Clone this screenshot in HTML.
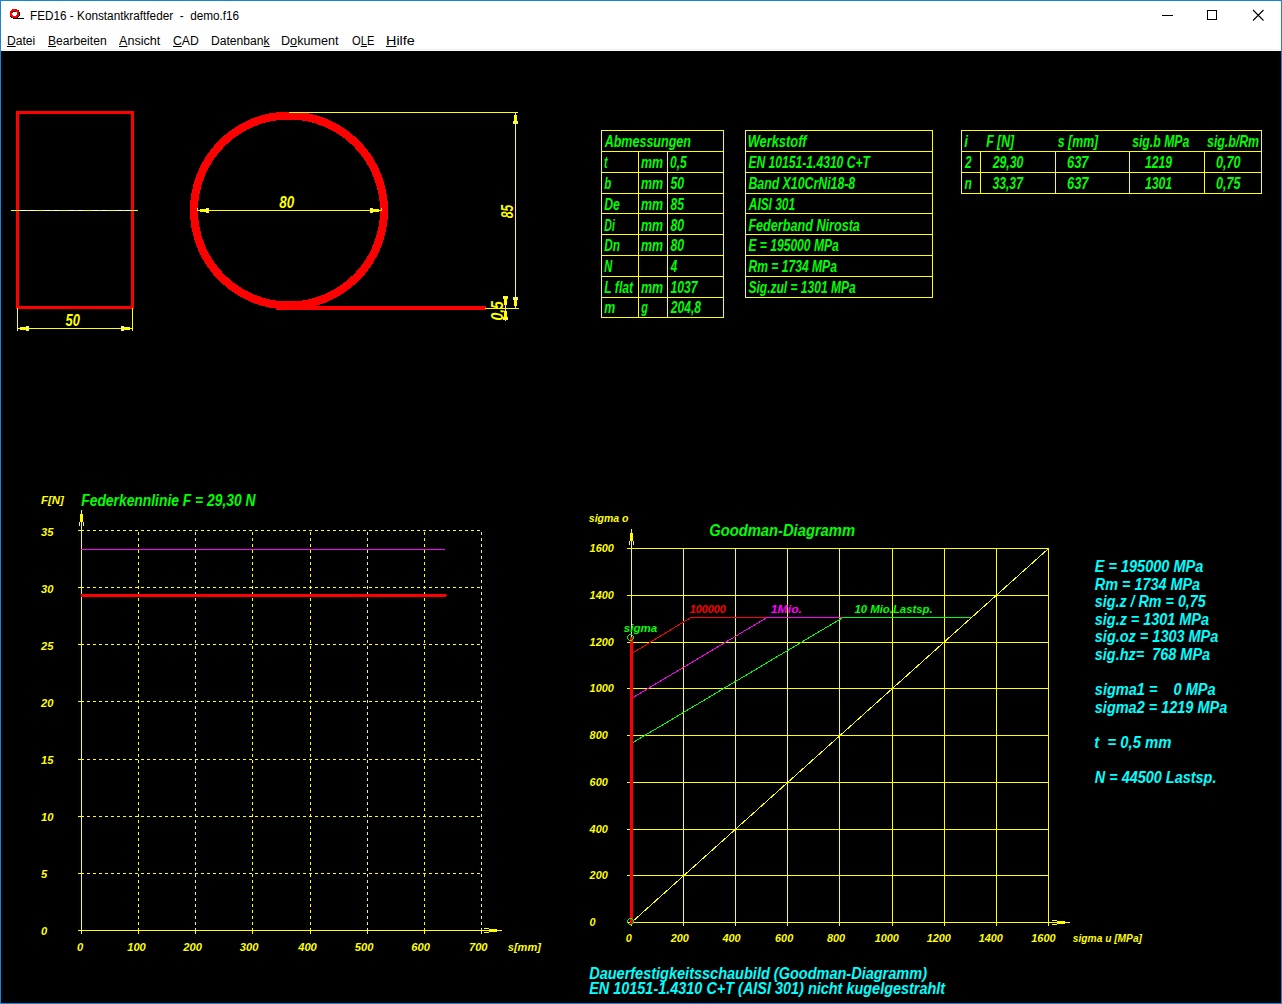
<!DOCTYPE html>
<html><head><meta charset="utf-8"><style>
html,body{margin:0;padding:0;width:1282px;height:1004px;overflow:hidden;background:#000;}
body{position:relative;font-family:"Liberation Sans",sans-serif;}
#win{position:absolute;left:0;top:0;width:1280px;height:1002px;border:1px solid #1883d7;background:#000;}
#title{position:absolute;left:0;top:0;width:1280px;height:30px;background:#fff;}
#menu{position:absolute;left:0;top:30px;width:1280px;height:20px;background:#fff;}
#menuline{position:absolute;left:0;top:48px;width:1280px;height:1px;background:#f0f0f0;}
.tt{position:absolute;left:29px;top:8px;font-size:12px;color:#000;white-space:pre;transform:scaleX(0.98);transform-origin:0 0;}
.mi{position:absolute;top:3px;font-size:12px;color:#000;white-space:pre;transform-origin:0 0;}
svg{position:absolute;left:0;top:0;}
svg text{font-family:"Liberation Sans",sans-serif;font-weight:bold;font-style:italic;white-space:pre;}
</style></head><body>
<div id="win">
<div id="title">
<svg width="30" height="30" style="left:0;top:0" shape-rendering="crispEdges"><rect x="11" y="8" width="5" height="1" fill="#f00"/><rect x="10" y="9" width="7" height="1" fill="#f00"/><rect x="17" y="9" width="1" height="1" fill="#000"/><rect x="9" y="10" width="3" height="1" fill="#f00"/><rect x="12" y="10" width="3" height="1" fill="#000"/><rect x="15" y="10" width="3" height="1" fill="#f00"/><rect x="9" y="11" width="2" height="1" fill="#f00"/><rect x="11" y="11" width="1" height="1" fill="#000"/><rect x="16" y="11" width="2" height="1" fill="#f00"/><rect x="18" y="11" width="1" height="1" fill="#000"/><rect x="9" y="12" width="2" height="1" fill="#f00"/><rect x="16" y="12" width="2" height="1" fill="#f00"/><rect x="18" y="12" width="1" height="1" fill="#000"/><rect x="9" y="13" width="2" height="1" fill="#f00"/><rect x="16" y="13" width="2" height="1" fill="#f00"/><rect x="18" y="13" width="1" height="1" fill="#000"/><rect x="9" y="14" width="3" height="1" fill="#f00"/><rect x="15" y="14" width="3" height="1" fill="#f00"/><rect x="18" y="14" width="1" height="1" fill="#000"/><rect x="9" y="15" width="1" height="1" fill="#000"/><rect x="10" y="15" width="7" height="1" fill="#f00"/><rect x="17" y="15" width="1" height="1" fill="#000"/><rect x="10" y="16" width="1" height="1" fill="#000"/><rect x="11" y="16" width="5" height="1" fill="#f00"/><rect x="16" y="16" width="1" height="1" fill="#000"/><rect x="12" y="17" width="11" height="1" fill="#000"/></svg>
<span class="tt">FED16 - Konstantkraftfeder  -  demo.f16</span>
<svg width="1280" height="30" style="left:0;top:0">
<line x1="1161" y1="14.5" x2="1172" y2="14.5" stroke="#000" stroke-width="1"/>
<rect x="1206.5" y="9.5" width="9" height="9" fill="none" stroke="#000" stroke-width="1"/>
<path d="M1252,9 L1262.5,19.5 M1262.5,9 L1252,19.5" stroke="#000" stroke-width="1.1"/>
</svg>
</div>
<div id="menu"><span class="mi" style="left:6.2px;transform:scaleX(1.01)"><u>D</u>atei</span><span class="mi" style="left:47px;transform:scaleX(1.01)"><u>B</u>earbeiten</span><span class="mi" style="left:118px;transform:scaleX(1.05)"><u>A</u>nsicht</span><span class="mi" style="left:171.5px;transform:scaleX(1.02)"><u>C</u>AD</span><span class="mi" style="left:209.5px;transform:scaleX(1.01)">Datenban<u>k</u></span><span class="mi" style="left:280.3px;transform:scaleX(1.05)">D<u>o</u>kument</span><span class="mi" style="left:350.5px;transform:scaleX(0.93)">O<u>L</u>E</span><span class="mi" style="left:385px;transform:scaleX(1.2)"><u>H</u>ilfe</span></div>
<div id="menuline"></div>
</div>
<svg width="1282" height="1004" viewBox="0 0 1282 1004" shape-rendering="crispEdges" style="left:0;top:0">
<rect x="17.5" y="112.5" width="115" height="195" fill="none" stroke="#ff0000" stroke-width="3"/>
<line x1="11" y1="210.5" x2="138" y2="210.5" stroke="#ffff00" stroke-width="1"/>
<line x1="20" y1="210.5" x2="26" y2="210.5" stroke="#ffffff" stroke-width="1"/>
<line x1="29" y1="210.5" x2="35" y2="210.5" stroke="#ffffff" stroke-width="1"/>
<line x1="44" y1="210.5" x2="50" y2="210.5" stroke="#ffffff" stroke-width="1"/>
<line x1="53" y1="210.5" x2="59" y2="210.5" stroke="#ffffff" stroke-width="1"/>
<line x1="68" y1="210.5" x2="74" y2="210.5" stroke="#ffffff" stroke-width="1"/>
<line x1="77" y1="210.5" x2="83" y2="210.5" stroke="#ffffff" stroke-width="1"/>
<line x1="92" y1="210.5" x2="98" y2="210.5" stroke="#ffffff" stroke-width="1"/>
<line x1="101" y1="210.5" x2="107" y2="210.5" stroke="#ffffff" stroke-width="1"/>
<line x1="116" y1="210.5" x2="122" y2="210.5" stroke="#ffffff" stroke-width="1"/>
<line x1="125" y1="210.5" x2="131" y2="210.5" stroke="#ffffff" stroke-width="1"/>
<line x1="17.5" y1="308" x2="17.5" y2="331" stroke="#ffff00" stroke-width="1"/>
<line x1="132.5" y1="308" x2="132.5" y2="331" stroke="#ffff00" stroke-width="1"/>
<line x1="17" y1="328.5" x2="133" y2="328.5" stroke="#ffff00" stroke-width="1"/>
<rect x="20" y="327" width="6" height="3" fill="#ffff00"/>
<rect x="26" y="326" width="3" height="5" fill="#ffff00"/>
<rect x="26" y="327" width="2" height="1" fill="#ffffff"/>
<rect x="26" y="329" width="2" height="1" fill="#ffffff"/>
<rect x="124" y="327" width="6" height="3" fill="#ffff00"/>
<rect x="121" y="326" width="3" height="5" fill="#ffff00"/>
<rect x="122" y="327" width="2" height="1" fill="#ffffff"/>
<rect x="122" y="329" width="2" height="1" fill="#ffffff"/>
<text transform="translate(65.57,326) scale(0.8066,1)" fill="#ffff00" font-size="16" xml:space="preserve">50</text>
<circle cx="289" cy="210.5" r="95" fill="none" stroke="#ff0000" stroke-width="8"/>
<rect x="276" y="306" width="210" height="4" fill="#ff0000"/>
<line x1="289" y1="112.5" x2="518" y2="112.5" stroke="#ffff00" stroke-width="1"/>
<line x1="515.5" y1="112" x2="515.5" y2="309" stroke="#ffff00" stroke-width="1"/>
<line x1="485" y1="308.5" x2="519" y2="308.5" stroke="#ffff00" stroke-width="1"/>
<rect x="514" y="115" width="3" height="6" fill="#ffff00"/>
<rect x="513" y="121" width="5" height="3" fill="#ffff00"/>
<rect x="514" y="121" width="1" height="2" fill="#ffffff"/>
<rect x="516" y="121" width="1" height="2" fill="#ffffff"/>
<rect x="514" y="300" width="3" height="6" fill="#ffff00"/>
<rect x="513" y="297" width="5" height="3" fill="#ffff00"/>
<rect x="514" y="298" width="1" height="2" fill="#ffffff"/>
<rect x="516" y="298" width="1" height="2" fill="#ffffff"/>
<text transform="translate(513,218.25) rotate(-90) scale(0.7545,1)" fill="#ffff00" font-size="16" xml:space="preserve">85</text>
<line x1="505.5" y1="297" x2="505.5" y2="321" stroke="#ffff00" stroke-width="1"/>
<rect x="503" y="296" width="5" height="3" fill="#ffff00"/>
<rect x="504" y="297" width="1" height="1" fill="#ffffff"/>
<rect x="506" y="297" width="1" height="1" fill="#ffffff"/>
<rect x="504" y="299" width="3" height="6" fill="#ffff00"/>
<rect x="504" y="311" width="3" height="6" fill="#ffff00"/>
<rect x="503" y="317" width="5" height="3" fill="#ffff00"/>
<rect x="504" y="318" width="1" height="1" fill="#ffffff"/>
<rect x="506" y="318" width="1" height="1" fill="#ffffff"/>
<text transform="translate(503,320.59) rotate(-90) scale(0.8732,1)" fill="#ffff00" font-size="16" xml:space="preserve">0,5</text>
<line x1="197" y1="210.5" x2="382" y2="210.5" stroke="#ffff00" stroke-width="1"/>
<rect x="200" y="209" width="6" height="3" fill="#ffff00"/>
<rect x="206" y="208" width="3" height="5" fill="#ffff00"/>
<rect x="206" y="209" width="2" height="1" fill="#ffffff"/>
<rect x="206" y="211" width="2" height="1" fill="#ffffff"/>
<rect x="373" y="209" width="6" height="3" fill="#ffff00"/>
<rect x="370" y="208" width="3" height="5" fill="#ffff00"/>
<rect x="371" y="209" width="2" height="1" fill="#ffffff"/>
<rect x="371" y="211" width="2" height="1" fill="#ffffff"/>
<line x1="197.5" y1="208" x2="197.5" y2="211" stroke="#ffff00" stroke-width="1"/>
<line x1="381.5" y1="208" x2="381.5" y2="211" stroke="#ffff00" stroke-width="1"/>
<text transform="translate(279.23,208) scale(0.8372,1)" fill="#ffff00" font-size="16" xml:space="preserve">80</text>
<line x1="601" y1="130.5" x2="724" y2="130.5" stroke="#ffff00" stroke-width="1"/>
<line x1="601" y1="151.5" x2="724" y2="151.5" stroke="#ffff00" stroke-width="1"/>
<line x1="601" y1="172.5" x2="724" y2="172.5" stroke="#ffff00" stroke-width="1"/>
<line x1="601" y1="193.5" x2="724" y2="193.5" stroke="#ffff00" stroke-width="1"/>
<line x1="601" y1="213.5" x2="724" y2="213.5" stroke="#ffff00" stroke-width="1"/>
<line x1="601" y1="234.5" x2="724" y2="234.5" stroke="#ffff00" stroke-width="1"/>
<line x1="601" y1="255.5" x2="724" y2="255.5" stroke="#ffff00" stroke-width="1"/>
<line x1="601" y1="276.5" x2="724" y2="276.5" stroke="#ffff00" stroke-width="1"/>
<line x1="601" y1="297.5" x2="724" y2="297.5" stroke="#ffff00" stroke-width="1"/>
<line x1="601" y1="317.5" x2="724" y2="317.5" stroke="#ffff00" stroke-width="1"/>
<line x1="601.5" y1="130" x2="601.5" y2="318" stroke="#ffff00" stroke-width="1"/>
<line x1="723.5" y1="130" x2="723.5" y2="318" stroke="#ffff00" stroke-width="1"/>
<line x1="638.5" y1="151" x2="638.5" y2="318" stroke="#ffff00" stroke-width="1"/>
<line x1="667.5" y1="151" x2="667.5" y2="318" stroke="#ffff00" stroke-width="1"/>
<text transform="translate(604.65,147) scale(0.7833,1)" fill="#00ff00" font-size="16" xml:space="preserve">Abmessungen</text>
<text transform="translate(604.04,168) scale(0.6731,1)" fill="#00ff00" font-size="16" xml:space="preserve">t</text>
<text transform="translate(640.98,168) scale(0.7740,1)" fill="#00ff00" font-size="16" xml:space="preserve">mm</text>
<text transform="translate(670.09,168) scale(0.7491,1)" fill="#00ff00" font-size="16" xml:space="preserve">0,5</text>
<text transform="translate(604.30,189) scale(0.7190,1)" fill="#00ff00" font-size="16" xml:space="preserve">b</text>
<text transform="translate(640.98,189) scale(0.7740,1)" fill="#00ff00" font-size="16" xml:space="preserve">mm</text>
<text transform="translate(670.48,189) scale(0.7666,1)" fill="#00ff00" font-size="16" xml:space="preserve">50</text>
<text transform="translate(604.29,210) scale(0.7606,1)" fill="#00ff00" font-size="16" xml:space="preserve">De</text>
<text transform="translate(640.98,210) scale(0.7740,1)" fill="#00ff00" font-size="16" xml:space="preserve">mm</text>
<text transform="translate(670.45,210) scale(0.7545,1)" fill="#00ff00" font-size="16" xml:space="preserve">85</text>
<text transform="translate(604.32,231) scale(0.6562,1)" fill="#00ff00" font-size="16" xml:space="preserve">Di</text>
<text transform="translate(640.98,231) scale(0.7740,1)" fill="#00ff00" font-size="16" xml:space="preserve">mm</text>
<text transform="translate(670.45,231) scale(0.7683,1)" fill="#00ff00" font-size="16" xml:space="preserve">80</text>
<text transform="translate(604.29,251) scale(0.7353,1)" fill="#00ff00" font-size="16" xml:space="preserve">Dn</text>
<text transform="translate(640.98,251) scale(0.7740,1)" fill="#00ff00" font-size="16" xml:space="preserve">mm</text>
<text transform="translate(670.45,251) scale(0.7683,1)" fill="#00ff00" font-size="16" xml:space="preserve">80</text>
<text transform="translate(604.31,272) scale(0.6920,1)" fill="#00ff00" font-size="16" xml:space="preserve">N</text>
<text transform="translate(670.80,272) scale(0.7175,1)" fill="#00ff00" font-size="16" xml:space="preserve">4</text>
<text transform="translate(604.29,293) scale(0.7592,1)" fill="#00ff00" font-size="16" xml:space="preserve">L flat</text>
<text transform="translate(640.98,293) scale(0.7740,1)" fill="#00ff00" font-size="16" xml:space="preserve">mm</text>
<text transform="translate(670.39,293) scale(0.7628,1)" fill="#00ff00" font-size="16" xml:space="preserve">1037</text>
<text transform="translate(604.28,313) scale(0.7681,1)" fill="#00ff00" font-size="16" xml:space="preserve">m</text>
<text transform="translate(641.23,313) scale(0.6723,1)" fill="#00ff00" font-size="16" xml:space="preserve">g</text>
<text transform="translate(670.78,313) scale(0.7547,1)" fill="#00ff00" font-size="16" xml:space="preserve">204,8</text>
<line x1="745" y1="130.5" x2="933" y2="130.5" stroke="#ffff00" stroke-width="1"/>
<line x1="745" y1="151.5" x2="933" y2="151.5" stroke="#ffff00" stroke-width="1"/>
<line x1="745" y1="172.5" x2="933" y2="172.5" stroke="#ffff00" stroke-width="1"/>
<line x1="745" y1="193.5" x2="933" y2="193.5" stroke="#ffff00" stroke-width="1"/>
<line x1="745" y1="213.5" x2="933" y2="213.5" stroke="#ffff00" stroke-width="1"/>
<line x1="745" y1="234.5" x2="933" y2="234.5" stroke="#ffff00" stroke-width="1"/>
<line x1="745" y1="255.5" x2="933" y2="255.5" stroke="#ffff00" stroke-width="1"/>
<line x1="745" y1="276.5" x2="933" y2="276.5" stroke="#ffff00" stroke-width="1"/>
<line x1="745" y1="297.5" x2="933" y2="297.5" stroke="#ffff00" stroke-width="1"/>
<line x1="745.5" y1="130" x2="745.5" y2="298" stroke="#ffff00" stroke-width="1"/>
<line x1="932.5" y1="130" x2="932.5" y2="298" stroke="#ffff00" stroke-width="1"/>
<text transform="translate(747.67,147) scale(0.8043,1)" fill="#00ff00" font-size="16" xml:space="preserve">Werkstoff</text>
<text transform="translate(748.39,168) scale(0.7573,1)" fill="#00ff00" font-size="16" xml:space="preserve">EN 10151-1.4310 C+T</text>
<text transform="translate(748.38,189) scale(0.7715,1)" fill="#00ff00" font-size="16" xml:space="preserve">Band X10CrNi18-8</text>
<text transform="translate(748.84,210) scale(0.7421,1)" fill="#00ff00" font-size="16" xml:space="preserve">AISI 301</text>
<text transform="translate(748.38,231) scale(0.7892,1)" fill="#00ff00" font-size="16" xml:space="preserve">Federband Nirosta</text>
<text transform="translate(748.39,251) scale(0.7560,1)" fill="#00ff00" font-size="16" xml:space="preserve">E = 195000 MPa</text>
<text transform="translate(748.39,272) scale(0.7573,1)" fill="#00ff00" font-size="16" xml:space="preserve">Rm = 1734 MPa</text>
<text transform="translate(748.45,293) scale(0.7517,1)" fill="#00ff00" font-size="16" xml:space="preserve">Sig.zul = 1301 MPa</text>
<line x1="961" y1="130.5" x2="1262" y2="130.5" stroke="#ffff00" stroke-width="1"/>
<line x1="961" y1="151.5" x2="1262" y2="151.5" stroke="#ffff00" stroke-width="1"/>
<line x1="961" y1="172.5" x2="1262" y2="172.5" stroke="#ffff00" stroke-width="1"/>
<line x1="961" y1="193.5" x2="1262" y2="193.5" stroke="#ffff00" stroke-width="1"/>
<line x1="961.5" y1="130" x2="961.5" y2="194" stroke="#ffff00" stroke-width="1"/>
<line x1="1261.5" y1="130" x2="1261.5" y2="194" stroke="#ffff00" stroke-width="1"/>
<line x1="980.5" y1="151" x2="980.5" y2="194" stroke="#ffff00" stroke-width="1"/>
<line x1="1055.5" y1="151" x2="1055.5" y2="194" stroke="#ffff00" stroke-width="1"/>
<line x1="1129.5" y1="151" x2="1129.5" y2="194" stroke="#ffff00" stroke-width="1"/>
<line x1="1204.5" y1="151" x2="1204.5" y2="194" stroke="#ffff00" stroke-width="1"/>
<text transform="translate(964.17,147) scale(0.8333,1)" fill="#00ff00" font-size="16" xml:space="preserve">i</text>
<text transform="translate(986.19,147) scale(0.7678,1)" fill="#00ff00" font-size="16" xml:space="preserve">F [N]</text>
<text transform="translate(1057.85,147) scale(0.7688,1)" fill="#00ff00" font-size="16" xml:space="preserve">s [mm]</text>
<text transform="translate(1132.15,147) scale(0.7658,1)" fill="#00ff00" font-size="16" xml:space="preserve">sig.b MPa</text>
<text transform="translate(1207.05,147) scale(0.7708,1)" fill="#00ff00" font-size="16" xml:space="preserve">sig.b/Rm</text>
<text transform="translate(964.98,168) scale(0.7366,1)" fill="#00ff00" font-size="16" xml:space="preserve">2</text>
<text transform="translate(992.68,168) scale(0.7694,1)" fill="#00ff00" font-size="16" xml:space="preserve">29,30</text>
<text transform="translate(1066.99,168) scale(0.8057,1)" fill="#00ff00" font-size="16" xml:space="preserve">637</text>
<text transform="translate(1144.99,168) scale(0.7605,1)" fill="#00ff00" font-size="16" xml:space="preserve">1219</text>
<text transform="translate(1215.96,168) scale(0.7916,1)" fill="#00ff00" font-size="16" xml:space="preserve">0,70</text>
<text transform="translate(964.59,189) scale(0.7466,1)" fill="#00ff00" font-size="16" xml:space="preserve">n</text>
<text transform="translate(992.41,189) scale(0.7618,1)" fill="#00ff00" font-size="16" xml:space="preserve">33,37</text>
<text transform="translate(1066.99,189) scale(0.8057,1)" fill="#00ff00" font-size="16" xml:space="preserve">637</text>
<text transform="translate(1144.99,189) scale(0.7636,1)" fill="#00ff00" font-size="16" xml:space="preserve">1301</text>
<text transform="translate(1215.97,189) scale(0.7833,1)" fill="#00ff00" font-size="16" xml:space="preserve">0,75</text>
<line x1="138.5" y1="532" x2="138.5" y2="931" stroke="#ffff00" stroke-width="1" stroke-dasharray="3 3"/>
<line x1="81" y1="873.5" x2="482" y2="873.5" stroke="#ffff00" stroke-width="1" stroke-dasharray="3 3"/>
<line x1="195.5" y1="532" x2="195.5" y2="931" stroke="#ffff00" stroke-width="1" stroke-dasharray="3 3"/>
<line x1="81" y1="816.5" x2="482" y2="816.5" stroke="#ffff00" stroke-width="1" stroke-dasharray="3 3"/>
<line x1="252.5" y1="532" x2="252.5" y2="931" stroke="#ffff00" stroke-width="1" stroke-dasharray="3 3"/>
<line x1="81" y1="759.5" x2="482" y2="759.5" stroke="#ffff00" stroke-width="1" stroke-dasharray="3 3"/>
<line x1="310.5" y1="532" x2="310.5" y2="931" stroke="#ffff00" stroke-width="1" stroke-dasharray="3 3"/>
<line x1="81" y1="701.5" x2="482" y2="701.5" stroke="#ffff00" stroke-width="1" stroke-dasharray="3 3"/>
<line x1="367.5" y1="532" x2="367.5" y2="931" stroke="#ffff00" stroke-width="1" stroke-dasharray="3 3"/>
<line x1="81" y1="644.5" x2="482" y2="644.5" stroke="#ffff00" stroke-width="1" stroke-dasharray="3 3"/>
<line x1="424.5" y1="532" x2="424.5" y2="931" stroke="#ffff00" stroke-width="1" stroke-dasharray="3 3"/>
<line x1="81" y1="587.5" x2="482" y2="587.5" stroke="#ffff00" stroke-width="1" stroke-dasharray="3 3"/>
<line x1="481.5" y1="532" x2="481.5" y2="931" stroke="#ffff00" stroke-width="1" stroke-dasharray="3 3"/>
<line x1="81" y1="530.5" x2="482" y2="530.5" stroke="#ffff00" stroke-width="1" stroke-dasharray="3 3"/>
<line x1="81.5" y1="510" x2="81.5" y2="934" stroke="#ffff00" stroke-width="1"/>
<line x1="78" y1="930.5" x2="502" y2="930.5" stroke="#ffff00" stroke-width="1"/>
<line x1="138.5" y1="930" x2="138.5" y2="934" stroke="#ffff00" stroke-width="1"/>
<line x1="78" y1="873.5" x2="81" y2="873.5" stroke="#ffff00" stroke-width="1"/>
<line x1="195.5" y1="930" x2="195.5" y2="934" stroke="#ffff00" stroke-width="1"/>
<line x1="78" y1="816.5" x2="81" y2="816.5" stroke="#ffff00" stroke-width="1"/>
<line x1="252.5" y1="930" x2="252.5" y2="934" stroke="#ffff00" stroke-width="1"/>
<line x1="78" y1="759.5" x2="81" y2="759.5" stroke="#ffff00" stroke-width="1"/>
<line x1="310.5" y1="930" x2="310.5" y2="934" stroke="#ffff00" stroke-width="1"/>
<line x1="78" y1="701.5" x2="81" y2="701.5" stroke="#ffff00" stroke-width="1"/>
<line x1="367.5" y1="930" x2="367.5" y2="934" stroke="#ffff00" stroke-width="1"/>
<line x1="78" y1="644.5" x2="81" y2="644.5" stroke="#ffff00" stroke-width="1"/>
<line x1="424.5" y1="930" x2="424.5" y2="934" stroke="#ffff00" stroke-width="1"/>
<line x1="78" y1="587.5" x2="81" y2="587.5" stroke="#ffff00" stroke-width="1"/>
<line x1="481.5" y1="930" x2="481.5" y2="934" stroke="#ffff00" stroke-width="1"/>
<line x1="78" y1="530.5" x2="81" y2="530.5" stroke="#ffff00" stroke-width="1"/>
<line x1="81.5" y1="510" x2="81.5" y2="518" stroke="#ffff00" stroke-width="1"/>
<rect x="80" y="514" width="3" height="8" fill="#ffff00"/>
<rect x="79" y="522" width="1" height="4" fill="#ffff00"/>
<rect x="83" y="522" width="1" height="4" fill="#ffff00"/>
<line x1="481" y1="930.5" x2="502" y2="930.5" stroke="#ffff00" stroke-width="1"/>
<rect x="489" y="929" width="8" height="3" fill="#ffff00"/>
<rect x="484" y="928" width="5" height="1" fill="#ffff00"/>
<rect x="484" y="932" width="5" height="1" fill="#ffff00"/>
<line x1="81" y1="549.5" x2="445" y2="549.5" stroke="#ff00ff" stroke-width="1"/>
<rect x="81" y="594" width="365" height="3" fill="#ff0000"/>
<rect x="446" y="595" width="1" height="1" fill="#ff0000"/>
<text transform="translate(41.00,504) scale(1.0415,1)" fill="#ffff00" font-size="11" xml:space="preserve">F[N]</text>
<text transform="translate(81.26,506) scale(0.8144,1)" fill="#00ff00" font-size="17" xml:space="preserve">Federkennlinie F = 29,30 N</text>
<text transform="translate(40.92,935) scale(1.0149,1)" fill="#ffff00" font-size="11" xml:space="preserve">0</text>
<text transform="translate(77.03,951) scale(1.0149,1)" fill="#ffff00" font-size="11" xml:space="preserve">0</text>
<text transform="translate(40.92,878) scale(1.0149,1)" fill="#ffff00" font-size="11" xml:space="preserve">5</text>
<text transform="translate(127.20,951) scale(1.0149,1)" fill="#ffff00" font-size="11" xml:space="preserve">100</text>
<text transform="translate(40.92,821) scale(1.0149,1)" fill="#ffff00" font-size="11" xml:space="preserve">10</text>
<text transform="translate(183.27,951) scale(1.0149,1)" fill="#ffff00" font-size="11" xml:space="preserve">200</text>
<text transform="translate(40.92,764) scale(1.0149,1)" fill="#ffff00" font-size="11" xml:space="preserve">15</text>
<text transform="translate(239.82,951) scale(1.0149,1)" fill="#ffff00" font-size="11" xml:space="preserve">300</text>
<text transform="translate(40.92,707) scale(1.0149,1)" fill="#ffff00" font-size="11" xml:space="preserve">20</text>
<text transform="translate(298.20,951) scale(1.0149,1)" fill="#ffff00" font-size="11" xml:space="preserve">400</text>
<text transform="translate(40.92,650) scale(1.0149,1)" fill="#ffff00" font-size="11" xml:space="preserve">25</text>
<text transform="translate(354.79,951) scale(1.0149,1)" fill="#ffff00" font-size="11" xml:space="preserve">500</text>
<text transform="translate(40.92,593) scale(1.0149,1)" fill="#ffff00" font-size="11" xml:space="preserve">30</text>
<text transform="translate(411.37,951) scale(1.0149,1)" fill="#ffff00" font-size="11" xml:space="preserve">600</text>
<text transform="translate(40.92,536) scale(1.0149,1)" fill="#ffff00" font-size="11" xml:space="preserve">35</text>
<text transform="translate(468.92,951) scale(1.0149,1)" fill="#ffff00" font-size="11" xml:space="preserve">700</text>
<text transform="translate(507.76,951) scale(1.0041,1)" fill="#ffff00" font-size="11" xml:space="preserve">s[mm]</text>
<line x1="683.5" y1="548" x2="683.5" y2="926" stroke="#ffff00" stroke-width="1"/>
<line x1="627" y1="875.5" x2="1049" y2="875.5" stroke="#ffff00" stroke-width="1"/>
<line x1="735.5" y1="548" x2="735.5" y2="926" stroke="#ffff00" stroke-width="1"/>
<line x1="627" y1="829.5" x2="1049" y2="829.5" stroke="#ffff00" stroke-width="1"/>
<line x1="787.5" y1="548" x2="787.5" y2="926" stroke="#ffff00" stroke-width="1"/>
<line x1="627" y1="782.5" x2="1049" y2="782.5" stroke="#ffff00" stroke-width="1"/>
<line x1="839.5" y1="548" x2="839.5" y2="926" stroke="#ffff00" stroke-width="1"/>
<line x1="627" y1="735.5" x2="1049" y2="735.5" stroke="#ffff00" stroke-width="1"/>
<line x1="892.5" y1="548" x2="892.5" y2="926" stroke="#ffff00" stroke-width="1"/>
<line x1="627" y1="688.5" x2="1049" y2="688.5" stroke="#ffff00" stroke-width="1"/>
<line x1="944.5" y1="548" x2="944.5" y2="926" stroke="#ffff00" stroke-width="1"/>
<line x1="627" y1="642.5" x2="1049" y2="642.5" stroke="#ffff00" stroke-width="1"/>
<line x1="996.5" y1="548" x2="996.5" y2="926" stroke="#ffff00" stroke-width="1"/>
<line x1="627" y1="595.5" x2="1049" y2="595.5" stroke="#ffff00" stroke-width="1"/>
<line x1="1048.5" y1="548" x2="1048.5" y2="926" stroke="#ffff00" stroke-width="1"/>
<line x1="627" y1="548.5" x2="1049" y2="548.5" stroke="#ffff00" stroke-width="1"/>
<line x1="631.5" y1="529" x2="631.5" y2="926" stroke="#ffff00" stroke-width="1"/>
<line x1="627" y1="922.5" x2="1070" y2="922.5" stroke="#ffff00" stroke-width="1"/>
<line x1="631.5" y1="529" x2="631.5" y2="537" stroke="#ffff00" stroke-width="1"/>
<rect x="630" y="533" width="3" height="8" fill="#ffff00"/>
<rect x="629" y="541" width="1" height="4" fill="#ffff00"/>
<rect x="633" y="541" width="1" height="4" fill="#ffff00"/>
<line x1="1049" y1="922.5" x2="1070" y2="922.5" stroke="#ffff00" stroke-width="1"/>
<rect x="1057" y="921" width="8" height="3" fill="#ffff00"/>
<rect x="1052" y="920" width="5" height="1" fill="#ffff00"/>
<rect x="1052" y="924" width="5" height="1" fill="#ffff00"/>
<line x1="631.5" y1="922.5" x2="1048.5" y2="548.5" stroke="#ffff00" stroke-width="1"/>
<polyline points="633,652.7 691,617.5 767,617.5" fill="none" stroke="#ff0000" stroke-width="1"/>
<polyline points="633,697.5 767,617.5 843,617.5" fill="none" stroke="#ff00ff" stroke-width="1"/>
<polyline points="633,742.5 843,617.5 970.5,617.5" fill="none" stroke="#00ff00" stroke-width="1"/>
<rect x="630" y="637" width="3" height="287" fill="#ff0000"/>
<rect x="629" y="634" width="3" height="1" fill="#00ff00"/>
<rect x="629" y="640" width="3" height="1" fill="#00ff00"/>
<rect x="627" y="636" width="1" height="3" fill="#00ff00"/>
<rect x="633" y="636" width="1" height="3" fill="#00ff00"/>
<rect x="628" y="635" width="1" height="1" fill="#00ff00"/>
<rect x="632" y="635" width="1" height="1" fill="#00ff00"/>
<rect x="628" y="639" width="1" height="1" fill="#00ff00"/>
<rect x="632" y="639" width="1" height="1" fill="#00ff00"/>
<rect x="629" y="918" width="3" height="1" fill="#00ff00"/>
<rect x="629" y="924" width="3" height="1" fill="#00ff00"/>
<rect x="627" y="920" width="1" height="3" fill="#00ff00"/>
<rect x="633" y="920" width="1" height="3" fill="#00ff00"/>
<rect x="628" y="919" width="1" height="1" fill="#00ff00"/>
<rect x="632" y="919" width="1" height="1" fill="#00ff00"/>
<rect x="628" y="923" width="1" height="1" fill="#00ff00"/>
<rect x="632" y="923" width="1" height="1" fill="#00ff00"/>
<text transform="translate(588.87,522) scale(1.0476,1)" fill="#ffff00" font-size="10" xml:space="preserve">sigma o</text>
<text transform="translate(709.26,536) scale(0.8673,1)" fill="#00ff00" font-size="17" xml:space="preserve">Goodman-Diagramm</text>
<text transform="translate(689.81,613) scale(1.0816,1)" fill="#ff0000" font-size="10" xml:space="preserve">100000</text>
<text transform="translate(770.79,613) scale(1.2232,1)" fill="#ff00ff" font-size="10" xml:space="preserve">1Mio.</text>
<text transform="translate(854.50,613) scale(1.1344,1)" fill="#00ff00" font-size="10" xml:space="preserve">10 Mio.Lastsp.</text>
<text transform="translate(623.86,632) scale(1.1579,1)" fill="#00ff00" font-size="10" xml:space="preserve">sigma</text>
<text transform="translate(589.61,926) scale(1.0876,1)" fill="#ffff00" font-size="10" xml:space="preserve">0</text>
<text transform="translate(625.84,942) scale(1.0876,1)" fill="#ffff00" font-size="10" xml:space="preserve">0</text>
<text transform="translate(589.61,879) scale(1.0876,1)" fill="#ffff00" font-size="10" xml:space="preserve">200</text>
<text transform="translate(670.76,942) scale(1.0876,1)" fill="#ffff00" font-size="10" xml:space="preserve">200</text>
<text transform="translate(589.61,833) scale(1.0876,1)" fill="#ffff00" font-size="10" xml:space="preserve">400</text>
<text transform="translate(722.39,942) scale(1.0876,1)" fill="#ffff00" font-size="10" xml:space="preserve">400</text>
<text transform="translate(589.61,786) scale(1.0876,1)" fill="#ffff00" font-size="10" xml:space="preserve">600</text>
<text transform="translate(775.08,942) scale(1.0876,1)" fill="#ffff00" font-size="10" xml:space="preserve">600</text>
<text transform="translate(589.61,739) scale(1.0876,1)" fill="#ffff00" font-size="10" xml:space="preserve">800</text>
<text transform="translate(826.91,942) scale(1.0876,1)" fill="#ffff00" font-size="10" xml:space="preserve">800</text>
<text transform="translate(589.61,692) scale(1.0876,1)" fill="#ffff00" font-size="10" xml:space="preserve">1000</text>
<text transform="translate(874.71,942) scale(1.0876,1)" fill="#ffff00" font-size="10" xml:space="preserve">1000</text>
<text transform="translate(589.61,646) scale(1.0876,1)" fill="#ffff00" font-size="10" xml:space="preserve">1200</text>
<text transform="translate(926.71,942) scale(1.0876,1)" fill="#ffff00" font-size="10" xml:space="preserve">1200</text>
<text transform="translate(589.61,599) scale(1.0876,1)" fill="#ffff00" font-size="10" xml:space="preserve">1400</text>
<text transform="translate(978.71,942) scale(1.0876,1)" fill="#ffff00" font-size="10" xml:space="preserve">1400</text>
<text transform="translate(589.61,552) scale(1.0876,1)" fill="#ffff00" font-size="10" xml:space="preserve">1600</text>
<text transform="translate(1031.31,942) scale(1.0876,1)" fill="#ffff00" font-size="10" xml:space="preserve">1600</text>
<text transform="translate(1072.87,942) scale(1.0202,1)" fill="#ffff00" font-size="10" xml:space="preserve">sigma u [MPa]</text>
<text transform="translate(1094.75,572) scale(0.8548,1)" fill="#00ffff" font-size="17" xml:space="preserve">E = 195000 MPa</text>
<text transform="translate(1094.75,590) scale(0.8488,1)" fill="#00ffff" font-size="17" xml:space="preserve">Rm = 1734 MPa</text>
<text transform="translate(1094.82,607) scale(0.8422,1)" fill="#00ffff" font-size="17" xml:space="preserve">sig.z / Rm = 0,75</text>
<text transform="translate(1094.82,625) scale(0.8480,1)" fill="#00ffff" font-size="17" xml:space="preserve">sig.z = 1301 MPa</text>
<text transform="translate(1094.82,642) scale(0.8522,1)" fill="#00ffff" font-size="17" xml:space="preserve">sig.oz = 1303 MPa</text>
<text transform="translate(1094.82,660) scale(0.8510,1)" fill="#00ffff" font-size="17" xml:space="preserve">sig.hz=  768 MPa</text>
<text transform="translate(1094.82,695) scale(0.8559,1)" fill="#00ffff" font-size="17" xml:space="preserve">sigma1 =    0 MPa</text>
<text transform="translate(1094.82,713) scale(0.8524,1)" fill="#00ffff" font-size="17" xml:space="preserve">sigma2 = 1219 MPa</text>
<text transform="translate(1094.37,748) scale(0.8721,1)" fill="#00ffff" font-size="17" xml:space="preserve">t  = 0,5 mm</text>
<text transform="translate(1094.75,783) scale(0.8505,1)" fill="#00ffff" font-size="17" xml:space="preserve">N = 44500 Lastsp.</text>
<text transform="translate(589.15,979) scale(0.8542,1)" fill="#00ffff" font-size="17" xml:space="preserve">Dauerfestigkeitsschaubild (Goodman-Diagramm)</text>
<text transform="translate(589.15,994) scale(0.8504,1)" fill="#00ffff" font-size="17" xml:space="preserve">EN 10151-1.4310 C+T (AISI 301) nicht kugelgestrahlt</text>
</svg>
</body></html>
